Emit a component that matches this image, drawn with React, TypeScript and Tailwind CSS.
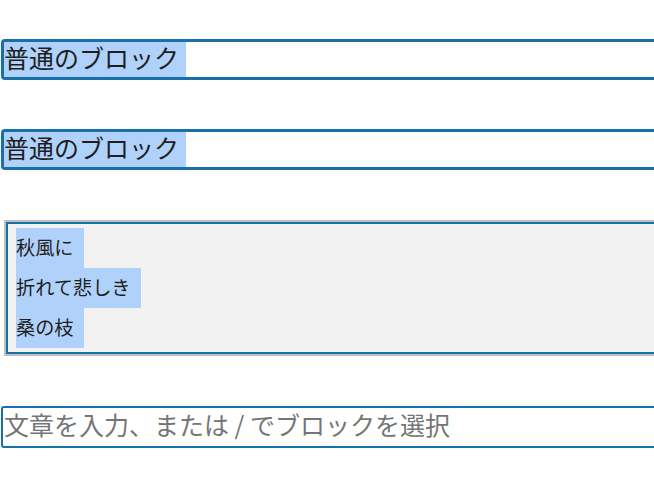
export default function App() {
  const font = { fontFamily: '"Noto Sans CJK JP", "Noto Sans", sans-serif' };
  const verse = ['秋風に', '折れて悲しき', '桑の枝'];

  return (
    <div className="w-[654px] h-[498px] overflow-hidden bg-white" style={font}>
      <div className="w-[760px] pt-[39px]">
        {/* 普通のブロック ×2 */}
        <div className="ml-[1px] border-[3px] border-[#1770ab] rounded-[4px] h-[41px]">
          <span className="inline-block h-[35px] leading-[30px] pb-[5px] text-[25px] text-[#1e1e1e] bg-[#b0d2fa] pr-[7px]">
            普通のブロック
          </span>
        </div>
        <div className="ml-[1px] mt-[49px] border-[3px] border-[#1770ab] rounded-[4px] h-[41px]">
          <span className="inline-block h-[35px] leading-[30px] pb-[5px] text-[25px] text-[#1e1e1e] bg-[#b0d2fa] pr-[7px]">
            普通のブロック
          </span>
        </div>

        {/* 詩のブロック */}
        <div className="ml-[4px] mt-[50px] border-2 border-[#c0c0c0]">
          <div className="border-2 border-[#1770ab] bg-[#f2f2f2] pl-[8px] py-[4px]">
            {verse.map((line) => (
              <div key={line} className="h-[40px]">
                <span className="inline-block h-[40px] leading-[38px] pb-[2px] text-[19.2px] text-[#1e1e1e] bg-[#b0d2fa] pr-[10px]">
                  {line}
                </span>
              </div>
            ))}
          </div>
        </div>

        {/* 空のブロック */}
        <div className="ml-[1px] mt-[50px] border-2 border-[#1770ab] rounded-[3px] h-[42px] pl-[1px]">
          <span className="block h-[38px] leading-[33px] pb-[5px] text-[25px] text-[#757575]">
            文章を入力、または / でブロックを選択
          </span>
        </div>
      </div>
    </div>
  );
}
